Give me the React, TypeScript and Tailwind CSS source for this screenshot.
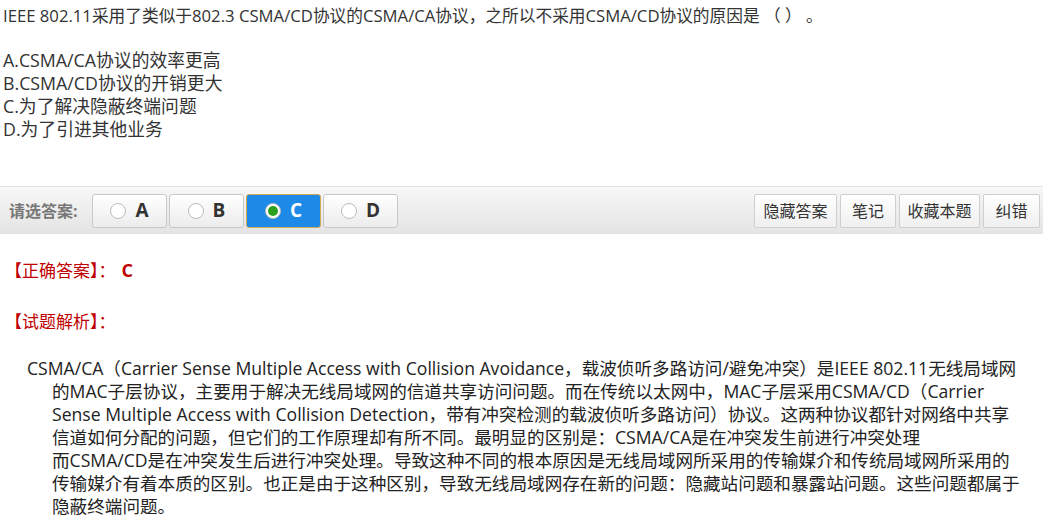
const font = { fontFamily: '"Open Sans", "Noto Sans CJK SC", sans-serif' };

function Radio({ checked }: { checked?: boolean }) {
  return (
    <span className="inline-flex h-[16px] w-[16px] items-center justify-center rounded-full border border-[#bbb] bg-white">
      {checked && <span className="h-[10px] w-[10px] rounded-full bg-[#2ca01c]" />}
    </span>
  );
}

function Choice({ label, active }: { label: string; active?: boolean }) {
  return (
    <button
      className={
        active
          ? "flex h-[34px] w-[75px] items-center justify-center gap-[9px] rounded-[3px] border border-[#d4a94f] bg-[#1c8ae6] text-[19px] font-bold text-white"
          : "flex h-[34px] w-[75px] items-center justify-center gap-[9px] rounded-[3px] border border-[#c8c8c8] bg-gradient-to-b from-white to-[#ececec] text-[19px] font-bold text-[#333]"
      }
    >
      <Radio checked={active} />
      <span>{label}</span>
    </button>
  );
}

function Tool({ label, w }: { label: string; w: string }) {
  return (
    <button className={`${w} h-[34px] rounded-[2px] border border-[#cfcfcf] bg-gradient-to-b from-white to-[#efefef] text-[16px] text-[#333]`}>
      {label}
    </button>
  );
}

export default function App() {
  return (
    <div className="h-[526px] w-[1043px] overflow-hidden bg-white text-[#333]" style={font}>
      <div className="px-[3px] pt-[4px] text-[16.7px] leading-[23px]">
        IEEE 802.11采用了类似于802.3 CSMA/CD协议的CSMA/CA协议，之所以不采用CSMA/CD协议的原因是 （ ） 。
      </div>
      <div className="mt-[22px] px-[3px] text-[17.8px] leading-[23px]">
        <p>A.CSMA/CA协议的效率更高</p>
        <p>B.CSMA/CD协议的开销更大</p>
        <p>C.为了解决隐蔽终端问题</p>
        <p>D.为了引进其他业务</p>
      </div>

      <div className="mt-[45px] flex h-[48px] items-center justify-between border-t border-[#e2e2e2] bg-gradient-to-b from-[#f7f7f7] to-[#e4e4e4] pl-[9px] pr-[3px]">
        <div className="flex items-center">
          <span className="w-[83px] text-[16px] font-bold text-[#777]">请选答案:</span>
          <div className="flex gap-[2px]">
            <Choice label="A" />
            <Choice label="B" />
            <Choice label="C" active />
            <Choice label="D" />
          </div>
        </div>
        <div className="flex gap-[3px]">
          <Tool label="隐藏答案" w="w-[83px]" />
          <Tool label="笔记" w="w-[56px]" />
          <Tool label="收藏本题" w="w-[81px]" />
          <Tool label="纠错" w="w-[57px]" />
        </div>
      </div>

      <div className="mt-[25px] pl-[5px] text-[17px] leading-[23px] text-[#c00000]">
        【正确答案】：<span className="ml-[6px] text-[18px] font-bold">C</span>
      </div>
      <div className="mt-[28px] pl-[5px] text-[17px] leading-[23px] text-[#c00000]">【试题解析】：</div>

      <p className="mt-[24px] whitespace-nowrap pl-[52px] indent-[-25px] text-[17.6px] leading-[23px] text-[#222]">
        CSMA/CA（Carrier Sense Multiple Access with Collision Avoidance，载波侦听多路访问/避免冲突）是IEEE 802.11无线局域网
        <br />
        的MAC子层协议，主要用于解决无线局域网的信道共享访问问题。而在传统以太网中，MAC子层采用CSMA/CD（Carrier
        <br />
        Sense Multiple Access with Collision Detection，带有冲突检测的载波侦听多路访问）协议。这两种协议都针对网络中共享
        <br />
        信道如何分配的问题，但它们的工作原理却有所不同。最明显的区别是：CSMA/CA是在冲突发生前进行冲突处理
        <br />
        而CSMA/CD是在冲突发生后进行冲突处理。导致这种不同的根本原因是无线局域网所采用的传输媒介和传统局域网所采用的
        <br />
        传输媒介有着本质的区别。也正是由于这种区别，导致无线局域网存在新的问题：隐藏站问题和暴露站问题。这些问题都属于
        <br />
        隐蔽终端问题。
      </p>
    </div>
  );
}
